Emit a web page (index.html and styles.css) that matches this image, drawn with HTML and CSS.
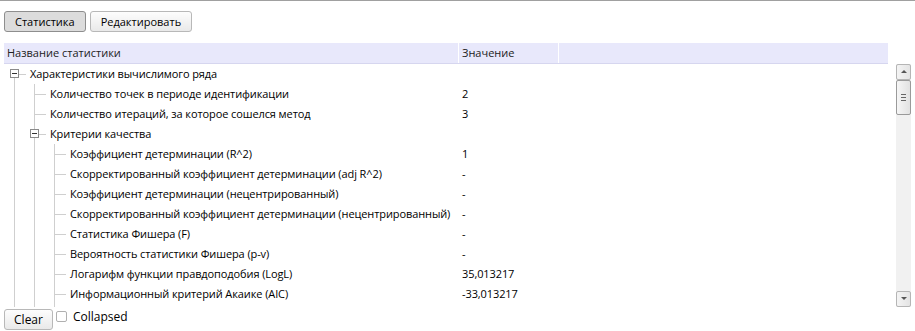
FILE: index.html
```html
<!DOCTYPE html>
<html lang="ru">
<head>
    <meta charset="UTF-8">
    <title>Статистика</title>
    <link rel="stylesheet" href="styles.css">
</head>
<body>
<div class="page">
    <div class="toolbar">
        <button class="btn pressed">Статистика</button>
        <button class="btn">Редактировать</button>
    </div>

    <div class="grid">
        <div class="head">
            <div class="hc name-col">Название статистики</div>
            <div class="hc val-col">Значение</div>
            <div class="hc fill-col"></div>
        </div>
        <div class="body">
            <div class="rows">
                <div class="row">
                    <div class="tree"><span class="c e first"><i class="box"></i></span><span class="name">Характеристики вычислимого ряда</span></div>
                    <span class="val"></span>
                </div>
                <div class="row">
                    <div class="tree"><span class="c v"></span><span class="c t"></span><span class="name">Количество точек в периоде идентификации</span></div>
                    <span class="val">2</span>
                </div>
                <div class="row">
                    <div class="tree"><span class="c v"></span><span class="c t"></span><span class="name">Количество итераций, за которое сошелся метод</span></div>
                    <span class="val">3</span>
                </div>
                <div class="row">
                    <div class="tree"><span class="c v"></span><span class="c e"><i class="box"></i></span><span class="name">Критерии качества</span></div>
                    <span class="val"></span>
                </div>
                <div class="row">
                    <div class="tree"><span class="c v"></span><span class="c v"></span><span class="c t"></span><span class="name">Коэффициент детерминации (R^2)</span></div>
                    <span class="val">1</span>
                </div>
                <div class="row">
                    <div class="tree"><span class="c v"></span><span class="c v"></span><span class="c t"></span><span class="name">Скорректированный коэффициент детерминации (adj R^2)</span></div>
                    <span class="val">-</span>
                </div>
                <div class="row">
                    <div class="tree"><span class="c v"></span><span class="c v"></span><span class="c t"></span><span class="name">Коэффициент детерминации (нецентрированный)</span></div>
                    <span class="val">-</span>
                </div>
                <div class="row">
                    <div class="tree"><span class="c v"></span><span class="c v"></span><span class="c t"></span><span class="name">Скорректированный коэффициент детерминации (нецентрированный)</span></div>
                    <span class="val">-</span>
                </div>
                <div class="row">
                    <div class="tree"><span class="c v"></span><span class="c v"></span><span class="c t"></span><span class="name">Статистика Фишера (F)</span></div>
                    <span class="val">-</span>
                </div>
                <div class="row">
                    <div class="tree"><span class="c v"></span><span class="c v"></span><span class="c t"></span><span class="name">Вероятность статистики Фишера (p-v)</span></div>
                    <span class="val">-</span>
                </div>
                <div class="row">
                    <div class="tree"><span class="c v"></span><span class="c v"></span><span class="c t"></span><span class="name">Логарифм функции правдоподобия (LogL)</span></div>
                    <span class="val">35,013217</span>
                </div>
                <div class="row">
                    <div class="tree"><span class="c v"></span><span class="c v"></span><span class="c t"></span><span class="name">Информационный критерий Акаике (AIC)</span></div>
                    <span class="val">-33,013217</span>
                </div>
                <div class="row">
                    <div class="tree"><span class="c v"></span><span class="c v"></span><span class="c t"></span><span class="name">Информационный критерий Шварца (SC)</span></div>
                    <span class="val">-34,219364</span>
                </div>
            </div>
            <div class="scrollbar">
                <div class="sb-btn up"></div>
                <div class="sb-thumb"><i></i><i></i><i></i></div>
                <div class="sb-track"></div>
                <div class="sb-btn down"></div>
            </div>
        </div>
    </div>

    <div class="footer">
        <button class="btn clear">Clear</button>
        <label class="check"><span class="box-check"></span>Collapsed</label>
    </div>
</div>
</body>
</html>
```

FILE: styles.css
```css
body {
    margin: 0;
    font-family: "Open Sans", "Noto Sans", sans-serif;
    font-size: 11px;
    color: #000;
    background: #fff;
}

.page {
    border-top: 1px solid #a0a0a0;
    padding: 10px 4px 0 4px;
}

/* buttons */
.toolbar {
    display: flex;
    gap: 4px;
    height: 21px;
}

.btn {
    font-family: inherit;
    font-size: 11px;
    height: 21px;
    padding: 0 10px;
    border: 1px solid #b8b8b8;
    border-radius: 3px;
    background: linear-gradient(#fdfdfd, #e9e9e9);
    color: #000;
}

.btn.pressed {
    background: #dcdcdc;
    border-color: #8e8e8e;
}

/* grid */
.grid {
    margin-top: 11px;
}

.head {
    display: flex;
    width: 884px;
    height: 20px;
    background: #e8e8fb;
    border-bottom: 1px solid #d6d6ef;
    line-height: 20px;
}

.hc {
    padding-left: 3px;
    box-sizing: border-box;
    color: #222;
}

.name-col {
    width: 455px;
    border-right: 1px solid #fff;
}

.val-col {
    width: 100px;
    border-right: 1px solid #fff;
}

.fill-col {
    flex: 1;
}

.body {
    display: flex;
    height: 243px;
}

.rows {
    flex: 1;
    overflow: hidden;
}

.row {
    display: flex;
    height: 20px;
    line-height: 20px;
    white-space: nowrap;
    letter-spacing: -0.1px;
}

.tree {
    display: flex;
    width: 458px;
    flex: none;
    overflow: hidden;
}

.c {
    position: relative;
    flex: none;
    width: 20px;
    height: 20px;
}

.c.v::before,
.c.t::before,
.c.e::before {
    content: '';
    position: absolute;
    left: 10px;
    top: 0;
    bottom: 0;
    border-left: 1px solid #cfcfcf;
}

.c.e.first::before {
    top: 10px;
}

.c.t::after,
.c.e::after {
    content: '';
    position: absolute;
    left: 10px;
    top: 10px;
    width: 12px;
    border-top: 1px solid #cfcfcf;
}

.box {
    position: absolute;
    z-index: 1;
    left: 6px;
    top: 5px;
    width: 7px;
    height: 7px;
    border: 1px solid #8a8a8a;
    background: #fff;
}

.box::after {
    content: '';
    position: absolute;
    left: 1px;
    top: 3px;
    width: 5px;
    border-top: 1px solid #333;
}

.name {
    margin-left: 6px;
}

.val {
    flex: 1;
}

/* fake scrollbar */
.scrollbar {
    width: 15px;
    margin-left: 1px;
    display: flex;
    flex-direction: column;
    background: #f1f1f1;
}

.sb-btn {
    position: relative;
    height: 16px;
    box-sizing: border-box;
    border: 1px solid #b5b5b5;
    border-radius: 2px;
    background: linear-gradient(to right, #f4f4f4, #e4e4e4);
}

.sb-btn::after {
    content: '';
    position: absolute;
    left: 4px;
    top: 5px;
    border-left: 3px solid transparent;
    border-right: 3px solid transparent;
}

.sb-btn.up::after {
    border-bottom: 3px solid #555;
}

.sb-btn.down::after {
    border-top: 3px solid #555;
}

.sb-thumb {
    height: 35px;
    box-sizing: border-box;
    border: 1px solid #9a9a9a;
    border-radius: 2px;
    background: linear-gradient(to right, #f6f6f6, #e2e2e2);
    display: flex;
    flex-direction: column;
    align-items: center;
    justify-content: center;
    gap: 2px;
}

.sb-thumb i {
    width: 5px;
    border-top: 1px solid #666;
}

.sb-track {
    flex: 1;
}

/* footer */
.footer {
    margin-top: 2px;
    display: flex;
    align-items: flex-start;
    gap: 3px;
    font-size: 12px;
}

.btn.clear {
    width: 49px;
    padding: 0;
    font-size: 12px;
}

.check {
    display: flex;
    align-items: center;
    height: 14px;
}

.box-check {
    width: 9px;
    height: 9px;
    border: 1px solid #b0b0b0;
    border-radius: 2px;
    margin-right: 6px;
}
```
